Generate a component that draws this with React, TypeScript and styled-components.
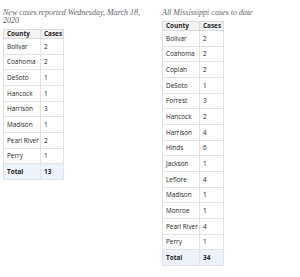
import React from 'react';
import styled, { createGlobalStyle } from 'styled-components';

type Row = { county: string; cases: number };

const GlobalStyle = createGlobalStyle`
  html, body {
    margin: 0;
    padding: 0;
    background: #ffffff;
    -webkit-font-smoothing: antialiased;
  }
`;

const Page = styled.div`
  display: grid;
  grid-template-columns: 159px 1fr;
  align-items: start;
  padding: 9px 0 0 3px;
`;

const Section = styled.section`
  display: flex;
  flex-direction: column;
  align-items: flex-start;
`;

const Caption = styled.p`
  margin: 0 0 4px 0;
  max-width: 138px;
  font-family: 'Liberation Serif', 'Times New Roman', serif;
  font-style: italic;
  font-size: 8px;
  line-height: 8px;
  color: #666666;
`;

const Table = styled.table<{ casesWidth: number }>`
  border-collapse: collapse;
  font-family: 'Open Sans', 'Liberation Sans', sans-serif;
  font-size: 6.4px;
  color: #1e1e1e;
  table-layout: fixed;
  width: ${(props) => 37 + props.casesWidth}px;

  col.county {
    width: 37px;
  }
  col.cases {
    width: ${(props) => props.casesWidth}px;
  }
`;

const HeadCell = styled.th`
  height: 8px;
  padding: 0 3px;
  text-align: left;
  font-weight: 700;
  background: #f3f3f3;
  border: 1px solid #dcdcdc;
  line-height: 8px;
`;

const Cell = styled.td<{ total?: boolean }>`
  height: 14.67px;
  padding: 0 3px;
  text-align: left;
  font-weight: ${(props) => (props.total ? 700 : 400)};
  background: ${(props) => (props.total ? '#eef3fb' : '#ffffff')};
  border: 1px solid ${(props) => (props.total ? '#dfe3ea' : '#e2e2e2')};
  white-space: nowrap;
`;

const newCases: Row[] = [
  { county: 'Bolivar', cases: 2 },
  { county: 'Coahoma', cases: 2 },
  { county: 'DeSoto', cases: 1 },
  { county: 'Hancock', cases: 1 },
  { county: 'Harrison', cases: 3 },
  { county: 'Madison', cases: 1 },
  { county: 'Pearl River', cases: 2 },
  { county: 'Perry', cases: 1 },
];

const allCases: Row[] = [
  { county: 'Bolivar', cases: 2 },
  { county: 'Coahoma', cases: 2 },
  { county: 'Copiah', cases: 2 },
  { county: 'DeSoto', cases: 1 },
  { county: 'Forrest', cases: 3 },
  { county: 'Hancock', cases: 2 },
  { county: 'Harrison', cases: 4 },
  { county: 'Hinds', cases: 6 },
  { county: 'Jackson', cases: 1 },
  { county: 'Leflore', cases: 4 },
  { county: 'Madison', cases: 1 },
  { county: 'Monroe', cases: 1 },
  { county: 'Pearl River', cases: 4 },
  { county: 'Perry', cases: 1 },
];

const CasesTable = ({ rows, casesWidth }: { rows: Row[]; casesWidth: number }) => {
  const total = rows.reduce((sum, r) => sum + r.cases, 0);
  return (
    <Table casesWidth={casesWidth}>
      <colgroup>
        <col className="county" />
        <col className="cases" />
      </colgroup>
      <thead>
        <tr>
          <HeadCell>County</HeadCell>
          <HeadCell>Cases</HeadCell>
        </tr>
      </thead>
      <tbody>
        {rows.map((r) => (
          <tr key={r.county}>
            <Cell>{r.county}</Cell>
            <Cell>{r.cases}</Cell>
          </tr>
        ))}
        <tr>
          <Cell total>Total</Cell>
          <Cell total>{total}</Cell>
        </tr>
      </tbody>
    </Table>
  );
};

export default function App() {
  return (
    <>
      <GlobalStyle />
      <Page>
        <Section>
          <Caption>New cases reported Wednesday, March 18, 2020</Caption>
          <CasesTable rows={newCases} casesWidth={23} />
        </Section>
        <Section>
          <Caption>All Mississippi cases to date</Caption>
          <CasesTable rows={allCases} casesWidth={24} />
        </Section>
      </Page>
    </>
  );
}
